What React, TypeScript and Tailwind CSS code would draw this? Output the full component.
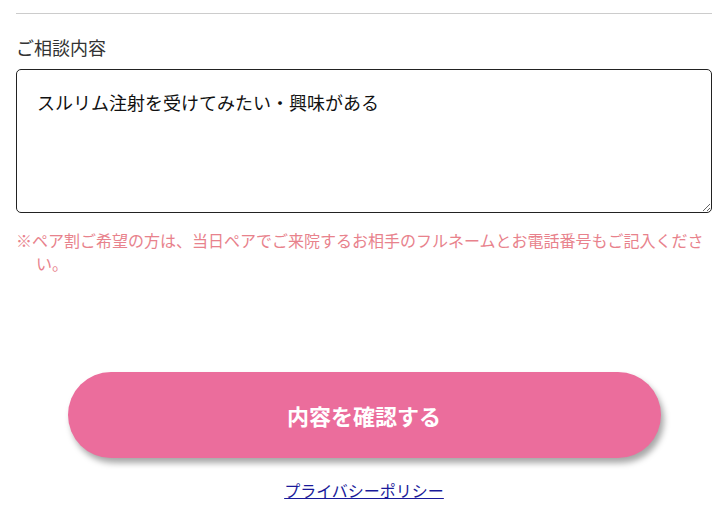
const App = () => {
  return (
    <div className="w-[728px] h-[520px] bg-white overflow-hidden font-['Noto_Sans_CJK_JP',sans-serif] text-[#222]">
      <div className="px-4 pt-[13px]">
        <div className="h-px bg-[#cccccc]" />

        <label className="block mt-[20px] text-[18px] leading-[27px] text-[#333]">
          ご相談内容
        </label>

        <textarea
          className="block w-full h-[144px] mt-[8px] px-5 py-[18px] border border-[#222] rounded-[5px] text-[18px] leading-[28px] text-[#111] resize-y outline-none"
          defaultValue="スルリム注射を受けてみたい・興味がある"
        />

        <p className="mt-[16px] pl-[20px] -indent-[20px] text-[16px] leading-[23px] text-[#e8828c]">
          ※ペア割ご希望の方は、当日ペアでご来院するお相手のフルネームとお電話番号もご記入ください。
        </p>
      </div>

      <div className="flex justify-center mt-[97px]">
        <button
          type="button"
          className="w-[593px] h-[86px] rounded-full bg-[#eb6d9c] text-white text-[22px] font-bold shadow-[3px_5px_6px_rgba(0,0,0,0.35)]"
        >
          内容を確認する
        </button>
      </div>

      <div className="flex justify-center mt-[20px]">
        <a href="#" className="text-[16px] leading-[24px] text-[#1a1a9a] underline">
          プライバシーポリシー
        </a>
      </div>
    </div>
  );
};

export default App;
